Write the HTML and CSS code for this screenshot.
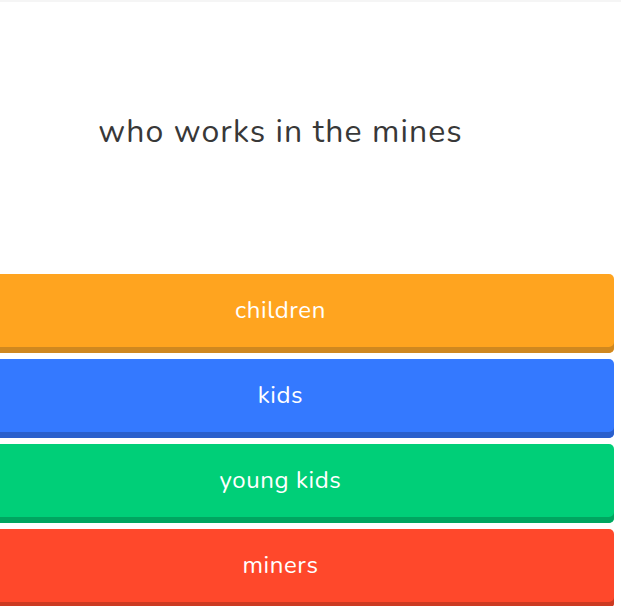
FILE: index.html
```html
<!DOCTYPE html>
<html lang="en">
<head>
  <meta charset="UTF-8" />
  <meta name="viewport" content="width=device-width, initial-scale=1.0"/>
  <title>Quiz</title>
  <link rel="stylesheet" href="styles.css">
</head>
<body>

  <!-- quiz card -->
  <div class="quiz">
    <div class="question">who works in the mines</div>

    <div class="options">
      <button class="option opt-orange">children</button>
      <button class="option opt-blue">kids</button>
      <button class="option opt-green">young kids</button>
      <button class="option opt-red">miners</button>
    </div>
  </div>

</body>
</html>
```

FILE: styles.css
```css
body {
  margin: 0;
  padding: 0;
  background: #fff;
  font-family: 'Nunito', 'Lato', 'Noto Sans', sans-serif;
  border-top: 2px solid #f5f5f5;
  overflow: hidden;
}

.quiz {
  width: 667px;
  margin-left: -53px;
}

.question {
  height: 272px;
  display: flex;
  align-items: center;
  justify-content: center;
  padding-bottom: 14px;
  box-sizing: border-box;
  font-size: 32px;
  letter-spacing: 1.1px;
  color: #383838;
}

.options {
  display: flex;
  flex-direction: column;
  gap: 6px;
}

.option {
  height: 79px;
  width: 100%;
  padding: 0 0 8px;
  border: none;
  border-radius: 5px;
  font-family: inherit;
  font-size: 24px;
  letter-spacing: 0.6px;
  color: #fff;
  cursor: pointer;
}

.opt-orange {
  background: #ffa41f;
  box-shadow: inset 0 -6px 0 #d0881f;
}

.opt-blue {
  background: #3479ff;
  box-shadow: inset 0 -6px 0 #2a5fcc;
}

.opt-green {
  background: #00cf78;
  box-shadow: inset 0 -6px 0 #00a660;
}

.opt-red {
  background: #ff482b;
  box-shadow: inset 0 -6px 0 #cc3a22;
}
```
